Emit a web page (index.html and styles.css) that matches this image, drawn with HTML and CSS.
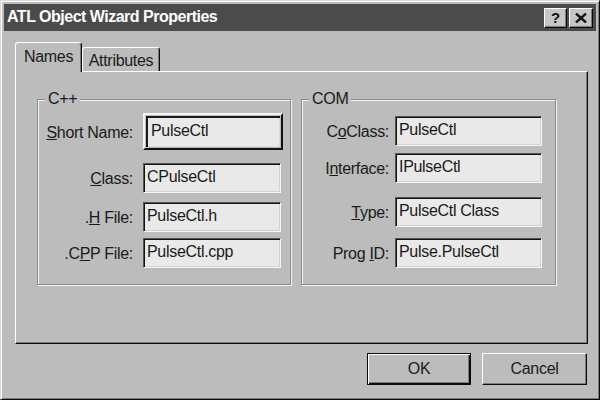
FILE: index.html
```html
<!DOCTYPE html>
<html>
<head>
    <link rel="stylesheet" href="styles.css">
</head>
<body>
    <div class="window">
        <div class="titlebar">
            <span class="title">ATL Object Wizard Properties</span>
            <div class="captionButtons">
                <button class="capBtn help">?</button>
                <button class="capBtn close">
                    <svg width="12" height="10" viewBox="0 0 12 10"><path d="M1 0.5 L11 9.5 M11 0.5 L1 9.5" stroke="#111" stroke-width="2.4" fill="none"/></svg>
                </button>
            </div>
        </div>
        <div class="client">
            <div class="tabs">
                <div class="tab active">Names</div>
                <div class="tab">Attributes</div>
            </div>
            <div class="panel">
                <fieldset class="group cpp">
                    <legend>C++</legend>
                    <div class="row">
                        <span class="label"><u>S</u>hort Name:</span>
                        <div class="field framed">PulseCtl</div>
                    </div>
                    <div class="row">
                        <span class="label"><u>C</u>lass:</span>
                        <div class="field">CPulseCtl</div>
                    </div>
                    <div class="row">
                        <span class="label">.<u>H</u> File:</span>
                        <div class="field">PulseCtl.h</div>
                    </div>
                    <div class="row">
                        <span class="label">.C<u>P</u>P File:</span>
                        <div class="field">PulseCtl.cpp</div>
                    </div>
                </fieldset>
                <fieldset class="group com">
                    <legend>COM</legend>
                    <div class="row">
                        <span class="label">C<u>o</u>Class:</span>
                        <div class="field">PulseCtl</div>
                    </div>
                    <div class="row">
                        <span class="label">I<u>n</u>terface:</span>
                        <div class="field">IPulseCtl</div>
                    </div>
                    <div class="row">
                        <span class="label"><u>T</u>ype:</span>
                        <div class="field">PulseCtl Class</div>
                    </div>
                    <div class="row">
                        <span class="label">Prog <u>I</u>D:</span>
                        <div class="field">Pulse.PulseCtl</div>
                    </div>
                </fieldset>
            </div>
            <div class="actions">
                <button class="btn default">OK</button>
                <button class="btn cancel">Cancel</button>
            </div>
        </div>
    </div>
</body>
</html>
```

FILE: styles.css
```css
body {
    margin: 0;
    padding: 0;
    background: #bcbcbc;
    font-family: "Liberation Sans", Arial, sans-serif;
    font-size: 16px;
    letter-spacing: -0.3px;
    color: #1a1a1a;
}

.window {
    width: 600px;
    height: 400px;
    box-sizing: border-box;
    border: 1px solid;
    border-color: #d8d8d8 #0a0a0a #0a0a0a #d8d8d8;
    box-shadow: inset 1px 1px #fff, inset -1px -1px #7c7c7c;
    padding: 3px;
    display: flex;
    flex-direction: column;
    background: #bcbcbc;
}

/* title bar */
.titlebar {
    height: 27px;
    flex: none;
    background: #4b4b4b;
    display: flex;
    align-items: center;
    padding: 0 3px;
}

.title {
    flex: 1;
    color: #fff;
    font-weight: bold;
    font-size: 16px;
    letter-spacing: -0.5px;
    padding-bottom: 1px;
}

.captionButtons {
    display: flex;
    gap: 2px;
}

.capBtn {
    width: 23px;
    height: 20px;
    padding: 0;
    box-sizing: border-box;
    background: #c6c6c6;
    border: 1px solid;
    border-color: #fff #0a0a0a #0a0a0a #fff;
    box-shadow: inset -1px -1px #7c7c7c;
    display: flex;
    align-items: center;
    justify-content: center;
    font-family: "Liberation Sans", Arial, sans-serif;
    font-weight: bold;
    font-size: 15px;
    color: #111;
}

.capBtn.close {
    width: 24px;
}

/* client area */
.client {
    flex: 1;
    padding: 11px 8px 0 11px;
    display: flex;
    flex-direction: column;
}

.tabs {
    display: flex;
    align-items: flex-end;
}

.tab {
    height: 24px;
    box-sizing: border-box;
    width: 78px;
    border: 1px solid;
    border-bottom: none;
    border-color: #fff #0a0a0a transparent #fff;
    border-radius: 3px 3px 0 0;
    box-shadow: inset -1px 0 #7c7c7c;
    background: #bcbcbc;
    display: flex;
    align-items: center;
    justify-content: center;
    padding-top: 2px;
}

.tab.active {
    width: 67px;
    height: 30px;
    margin-bottom: -1px;
    z-index: 1;
    padding-top: 0;
    padding-bottom: 2px;
}

.panel {
    height: 273px;
    box-sizing: border-box;
    border: 1px solid;
    border-color: #fff #0a0a0a #0a0a0a #fff;
    box-shadow: inset -1px -1px #7c7c7c;
    padding: 17px 0 0 21px;
    display: flex;
    align-items: flex-start;
    gap: 10px;
}

/* group boxes */
.group {
    margin: 0;
    padding: 0;
    min-width: 0;
    box-sizing: border-box;
    height: 196px;
    border: 1px solid #8a8a8a;
    box-shadow: inset 1px 1px #f4f4f4, 1px 1px #f4f4f4;
}

.group.cpp {
    width: 254px;
}

.group.com {
    width: 255px;
}

.group legend {
    margin-left: 7px;
    padding: 0 3px;
    line-height: 20px;
    background: #bcbcbc;
}

.row {
    display: flex;
    align-items: center;
}

.label {
    text-align: right;
    white-space: nowrap;
    padding-top: 2px;
}

.cpp .label {
    width: 95px;
    margin-right: 10px;
}

.com .label {
    width: 87px;
    margin-right: 6px;
}

.field {
    height: 30px;
    box-sizing: border-box;
    background: #e9e9e9;
    border: 1px solid;
    border-color: #555 #f6f6f6 #f6f6f6 #555;
    box-shadow: inset 1px 1px #111, inset -1px -1px #d2d2d2;
    padding: 0 3px 2px;
    display: flex;
    align-items: center;
    white-space: nowrap;
}

.cpp .field {
    width: 138px;
}

.com .field {
    width: 147px;
}

.cpp .field.framed {
    width: 140px;
    height: 37px;
    border-width: 2px;
    border-color: #f4f4f4 #111 #111 #f4f4f4;
    box-shadow: inset 0 0 0 1px #bcbcbc, inset 3px 3px #1a1a1a, inset -2px -2px #d8d8d8;
    padding-left: 6px;
}

.cpp .row:nth-of-type(1) { margin-top: 4px; }
.cpp .row:nth-of-type(2) { margin-top: 13px; }
.cpp .row:nth-of-type(3) { margin-top: 9px; }
.cpp .row:nth-of-type(4) { margin-top: 6px; }

.com .row:nth-of-type(1) { margin-top: 7px; }
.com .row:nth-of-type(2) { margin-top: 7px; }
.com .row:nth-of-type(3) { margin-top: 14px; }
.com .row:nth-of-type(4) { margin-top: 11px; }

/* dialog buttons */
.actions {
    display: flex;
    justify-content: flex-end;
    gap: 11px;
    margin-top: 9px;
    padding-right: 1px;
}

.btn {
    width: 105px;
    height: 32px;
    padding: 0;
    box-sizing: border-box;
    font: inherit;
    letter-spacing: inherit;
    color: #1a1a1a;
    background: #bcbcbc;
    border: 1px solid;
    border-color: #fff #0a0a0a #0a0a0a #fff;
    box-shadow: inset -1px -1px #7c7c7c;
}

.btn.default {
    width: 104px;
    border-color: #0a0a0a;
    box-shadow: inset 1px 1px #fff, inset -1px -1px #0a0a0a, inset -2px -2px #7c7c7c;
}
```
